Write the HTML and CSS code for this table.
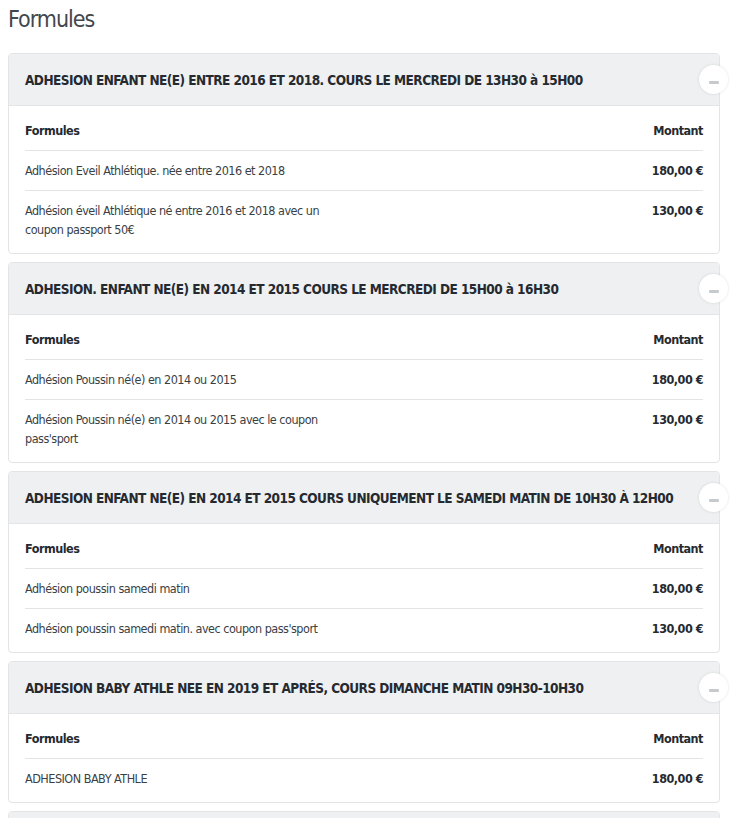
FILE: index.html
```html
<!DOCTYPE html>
<html lang="fr">
<head>
<meta charset="utf-8">
<title>Formules</title>
<link rel="stylesheet" href="styles.css">
</head>
<body>
<h1 class="page-title">Formules</h1>

<div class="card">
  <div class="card-head">
    <h2 class="card-title">ADHESION ENFANT NE(E) ENTRE 2016 ET 2018. COURS LE MERCREDI DE 13H30 à 15H00</h2>
    <span class="toggle"><span class="minus"></span></span>
  </div>
  <div class="card-body">
    <table class="tbl">
      <tr><th class="c-name">Formules</th><th class="c-amt">Montant</th></tr>
      <tr><td class="c-name">Adhésion Eveil Athlétique. née entre 2016 et 2018</td><td class="c-amt">180,00 €</td></tr>
      <tr><td class="c-name">Adhésion éveil Athlétique né entre 2016 et 2018 avec un coupon passport 50€</td><td class="c-amt">130,00 €</td></tr>
    </table>
  </div>
</div>

<div class="card">
  <div class="card-head">
    <h2 class="card-title">ADHESION. ENFANT NE(E) EN 2014 ET 2015 COURS LE MERCREDI DE 15H00 à 16H30</h2>
    <span class="toggle"><span class="minus"></span></span>
  </div>
  <div class="card-body">
    <table class="tbl">
      <tr><th class="c-name">Formules</th><th class="c-amt">Montant</th></tr>
      <tr><td class="c-name">Adhésion Poussin né(e) en 2014 ou 2015</td><td class="c-amt">180,00 €</td></tr>
      <tr><td class="c-name">Adhésion Poussin né(e) en 2014 ou 2015 avec le coupon pass'sport</td><td class="c-amt">130,00 €</td></tr>
    </table>
  </div>
</div>

<div class="card">
  <div class="card-head">
    <h2 class="card-title">ADHESION ENFANT NE(E) EN 2014 ET 2015 COURS UNIQUEMENT LE SAMEDI MATIN DE 10H30 À 12H00</h2>
    <span class="toggle"><span class="minus"></span></span>
  </div>
  <div class="card-body">
    <table class="tbl">
      <tr><th class="c-name">Formules</th><th class="c-amt">Montant</th></tr>
      <tr><td class="c-name">Adhésion poussin samedi matin</td><td class="c-amt">180,00 €</td></tr>
      <tr><td class="c-name">Adhésion poussin samedi matin. avec coupon pass'sport</td><td class="c-amt">130,00 €</td></tr>
    </table>
  </div>
</div>

<div class="card">
  <div class="card-head">
    <h2 class="card-title">ADHESION BABY ATHLE NEE EN 2019 ET APRÉS, COURS DIMANCHE MATIN 09H30-10H30</h2>
    <span class="toggle"><span class="minus"></span></span>
  </div>
  <div class="card-body">
    <table class="tbl">
      <tr><th class="c-name">Formules</th><th class="c-amt">Montant</th></tr>
      <tr><td class="c-name">ADHESION BABY ATHLE</td><td class="c-amt">180,00 €</td></tr>
    </table>
  </div>
</div>

<div class="card">
  <div class="card-head">
    <div class="card-title">&nbsp;</div>
  </div>
</div>
</body>
</html>
```

FILE: styles.css
```css
html, body {
  margin: 0;
  padding: 0;
  background: #ffffff;
}
body {
  padding: 0 12px 0 8px;
  font-family: "DejaVu Sans Condensed", "DejaVu Sans", sans-serif;
  color: #3a3f45;
  overflow: hidden;
  height: 818px;
}
.page-title {
  margin: 0;
  padding-top: 4px;
  height: 49px;
  font-size: 23px;
  font-weight: 400;
  letter-spacing: -1px;
  line-height: 30px;
  color: #42474d;
}
.card {
  position: relative;
  border: 1px solid #e2e4e6;
  border-radius: 4px;
  margin-bottom: 8px;
  background: #fff;
}
.card-head {
  background: #eef0f2;
  border-bottom: 1px solid #e2e4e6;
  border-radius: 4px 4px 0 0;
  padding: 16px 16px 15px 16px;
}
.card-title {
  margin: 0;
  font-size: 13.5px;
  font-weight: 700;
  letter-spacing: -0.55px;
  line-height: 20px;
  color: #252a30;
  white-space: nowrap;
}
.toggle {
  position: absolute;
  right: -9px;
  top: 11px;
  width: 29px;
  height: 29px;
  border-radius: 50%;
  background: #fff;
  box-shadow: 0 0 3px rgba(0,0,0,0.12);
  display: flex;
  align-items: center;
  justify-content: center;
}
.minus {
  display: block;
  width: 10px;
  height: 3px;
  margin-top: 6px;
  background: #c7cacd;
  border-radius: 1px;
}
.card-body {
  padding: 5px 16px 4px 16px;
}
.tbl {
  width: 100%;
  border-collapse: collapse;
  font-size: 12.5px;
  letter-spacing: -0.5px;
  line-height: 19px;
}
.tbl th, .tbl td {
  padding: 10px 0;
  vertical-align: top;
  text-align: left;
}
.tbl tr + tr th, .tbl tr + tr td {
  border-top: 1px solid #e2e4e6;
}
.tbl th {
  font-weight: 700;
  color: #252a30;
}
.tbl td {
  color: #3a3f45;
}
.tbl .c-name {
  width: 50%;
  padding-right: 20px;
}
.tbl .c-amt {
  text-align: right;
}
.tbl td.c-amt {
  font-weight: 700;
  color: #252a30;
}
```
